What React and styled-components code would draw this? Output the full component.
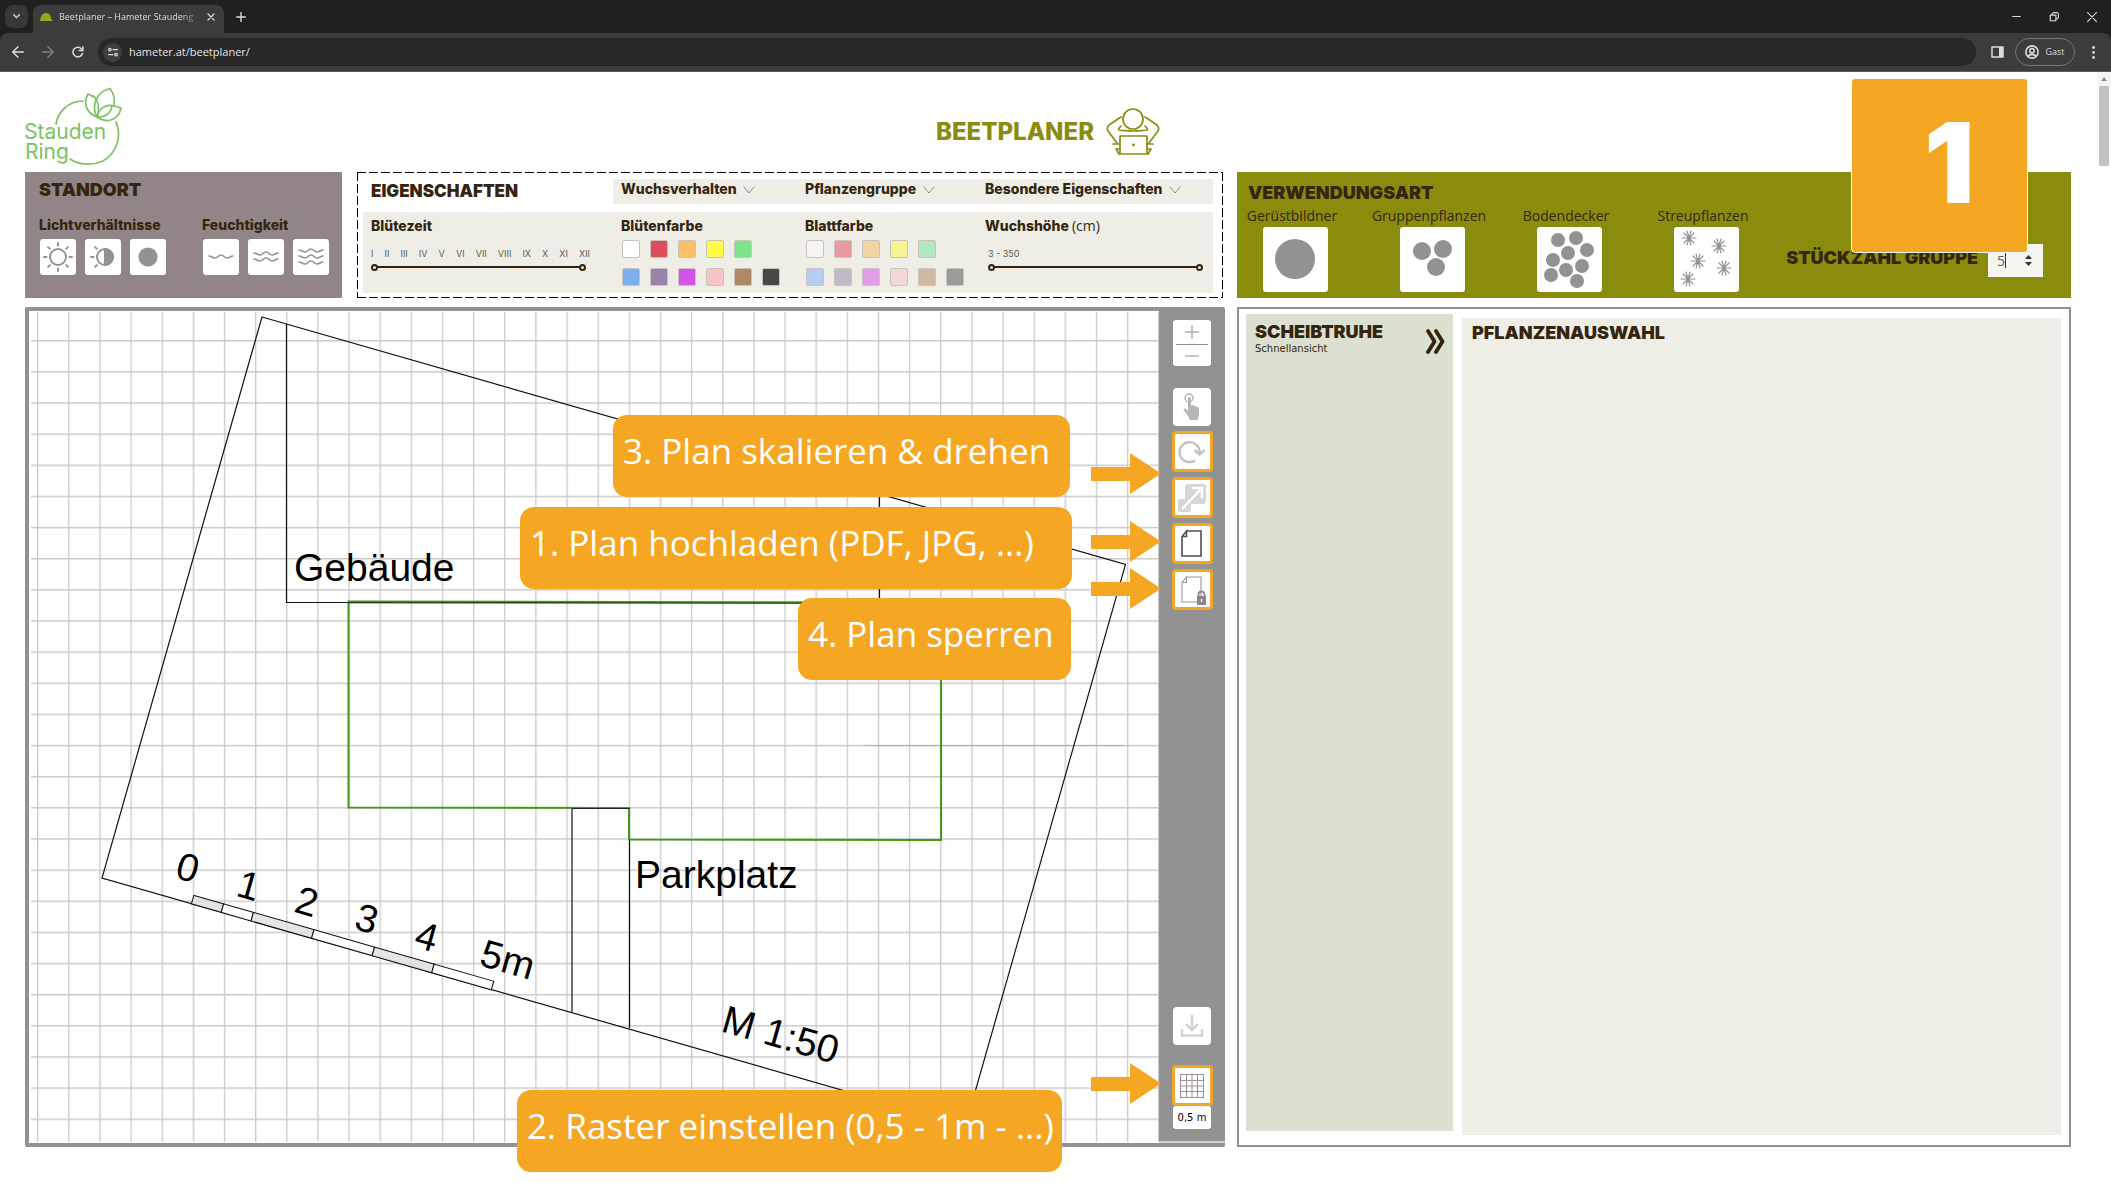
import React, { useState } from "react";
import styled, { createGlobalStyle } from "styled-components";

const color = {
  ink: "#35250f",
  grey: "#929292",
  olive: "#8a8c0e",
  mauve: "#928587",
  sand: "#eeede6",
  sage: "#dce0d1",
  orange: "#f5a623",
};

const GlobalStyle = createGlobalStyle`
  *, *::before, *::after { box-sizing: border-box; }
  body { margin: 0; background: #fff; color: ${color.ink}; font-family: Inter, "Liberation Sans", sans-serif; }
  button { font: inherit; color: inherit; padding: 0; border: 0; background: none; cursor: pointer; }
  svg { display: block; flex: none; }
`;

/* ---------- browser window ---------- */

const Chrome = styled.header`
  background: #202020;
  color: #dcdcdc;
  font-family: "Open Sans", sans-serif;
  border-bottom: 1px solid #5c5c5c;
`;

const TabStrip = styled.div`
  display: flex;
  align-items: flex-end;
  height: 33px;
  padding: 0 8px 0 5px;
`;

const TabSearch = styled.button`
  display: grid;
  place-items: center;
  width: 23px;
  height: 23px;
  margin: 0 5px 5px 0;
  border-radius: 8px;
  background: #383838;
`;

const Tab = styled.div`
  display: flex;
  align-items: center;
  gap: 6px;
  width: 191px;
  height: 28px;
  padding: 0 9px 4px 7px;
  border-radius: 8px 8px 0 0;
  background: #3c3c3c;
`;

const TabTitle = styled.span`
  flex: 1;
  overflow: hidden;
  white-space: nowrap;
  font-size: 9px;
  line-height: 14px;
  mask-image: linear-gradient(90deg, #000 86%, transparent);
`;

const NewTab = styled.button`
  display: grid;
  place-items: center;
  width: 34px;
  height: 33px;
`;

const WindowControls = styled.div`
  display: flex;
  margin-left: auto;
`;

const WindowButton = styled.button`
  display: grid;
  place-items: center;
  width: 38px;
  height: 33px;
  &:last-child { width: 22px; margin-left: 8px; }
`;

const NavBar = styled.div`
  display: flex;
  align-items: center;
  height: 38px;
  padding: 0 3px;
  background: #3c3c3c;
  border-radius: 8px 8px 0 0;
`;

const NavButton = styled.button`
  display: grid;
  place-items: center;
  width: 30px;
  height: 28px;
  color: ${(p) => (p.$dim ? "#7d7d7d" : "#dcdcdc")};
`;

const AddressBar = styled.label`
  display: flex;
  align-items: center;
  flex: 1;
  gap: 7px;
  height: 28px;
  margin: 0 6px 0 5px;
  padding: 0 5px;
  border-radius: 14px;
  background: #282828;
`;

const SiteInfo = styled.span`
  display: grid;
  place-items: center;
  width: 19px;
  height: 19px;
  border-radius: 50%;
  background: #3f3f3f;
`;

const AddressInput = styled.input`
  flex: 1;
  padding: 0;
  border: 0;
  outline: 0;
  background: none;
  color: #e4e4e4;
  font: 11px/16px "Open Sans", sans-serif;
`;

const Profile = styled.button`
  display: flex;
  align-items: center;
  justify-content: center;
  gap: 6px;
  width: 60px;
  height: 28px;
  margin: 0 3px;
  border: 1px solid #767676;
  border-radius: 14px;
  font-size: 9px;
  line-height: 14px;
`;

const Viewport = styled.div`
  display: flex;
`;

const ScrollTrack = styled.div`
  display: flex;
  flex-direction: column;
  align-items: center;
  width: 14px;
`;

const ScrollArrow = styled.span`
  display: grid;
  place-items: center;
  width: 14px;
  height: 14px;
  background: #f4f4f4;
`;

const ScrollThumb = styled.span`
  width: 10px;
  height: 80px;
  background: #c1c1c1;
`;

/* ---------- page ---------- */

const Page = styled.main`
  position: relative;
  flex: 1;
  min-width: 0;
  padding: 0 26px 40px 25px;
`;

const PageHeader = styled.div`
  display: grid;
  grid-template-columns: 1fr auto 1fr;
  align-items: center;
  height: 100px;
`;

const LogoLink = styled.a`
  justify-self: start;
  padding-top: 10px;
`;

const Title = styled.h1`
  display: flex;
  align-items: center;
  gap: 12px;
  margin: 0;
  padding-top: 20px;
  color: ${color.olive};
  font-weight: 800;
  font-size: 24px;
  line-height: 32px;
`;

const Layout = styled.div`
  display: grid;
  grid-template-columns: 1200fr 834fr;
  gap: 9px 12px;
`;

const Filters = styled.div`
  display: grid;
  grid-template-columns: 317px 1fr;
  gap: 15px;
  height: 126px;
  padding-right: 2px;
`;

const Heading = styled.h2`
  margin: 0;
  font-weight: 900;
  font-size: ${(p) => (p.$small ? 17 : 18)}px;
  line-height: 20px;
`;

const SubHeading = styled.h3`
  margin: 0;
  font-weight: 800;
  font-size: 14px;
  line-height: 20px;
`;

const Unit = styled.span`
  font-family: "Open Sans", sans-serif;
  font-weight: 400;
`;

const SiteCard = styled.section`
  padding: 8px 14px;
  background: ${color.mauve};
`;

const SiteGroups = styled.div`
  display: flex;
  gap: 36px;
  margin-top: 15px;
`;

const IconRow = styled.div`
  display: flex;
  gap: 9px;
  margin: 4px 0 0 1px;
`;

const IconButton = styled.button`
  display: grid;
  place-items: center;
  width: 36px;
  height: 36px;
  border-radius: 3px;
  background: #fff;
`;

const dashX = "repeating-linear-gradient(90deg, #000 0 9px, transparent 9px 12px)";
const dashY = "repeating-linear-gradient(180deg, #000 0 9px, transparent 9px 12px)";

const Traits = styled.section`
  display: flex;
  flex-direction: column;
  gap: 8px;
  padding: 7px 10px 5px 6px;
  background:
    ${dashX} top / 100% 1px no-repeat,
    ${dashX} bottom / 100% 1px no-repeat,
    ${dashY} left / 1px 100% no-repeat,
    ${dashY} right / 1px 100% no-repeat;
`;

const TraitRow = styled.div`
  display: grid;
  grid-template-columns: 250fr 184fr 180fr 236fr;
  height: ${(p) => (p.$tall ? 81 : 25)}px;
  background: ${(p) => (p.$tall ? color.sand : `linear-gradient(90deg, #fff 250px, ${color.sand} 250px)`)};
`;

const TraitCell = styled.div`
  padding: ${(p) => (p.$head ? 2 : 4)}px 8px 0;
`;

const DropLabel = styled.label`
  display: flex;
  align-items: center;
  gap: 6px;
  padding: 0 8px 5px;
`;

const DropSelect = styled.select`
  appearance: none;
  padding: 0;
  border: 0;
  background: none;
  color: ${color.ink};
  font: 800 14px/20px Inter, sans-serif;
`;

const Swatches = styled.div`
  display: grid;
  grid-template-columns: repeat(6, 18px);
  gap: 10px;
  margin: 4px 0 0 1px;
`;

const Swatch = styled.button`
  width: 18px;
  height: 18px;
  border: 1px solid #c9c4bb;
  border-radius: 2px;
  background: ${(p) => p.$fill};
`;

const Months = styled.div`
  display: flex;
  justify-content: space-between;
  width: 219px;
  margin-top: 12px;
  color: #5f5a52;
  font-size: 9px;
  line-height: 12px;
`;

const RangeText = styled.div`
  margin: 12px 0 0 3px;
  color: #5f5a52;
  font-size: 9px;
  line-height: 12px;
`;

const DualRange = styled.div`
  position: relative;
  width: 215px;
  height: 8px;
  margin: ${(p) => (p.$indent ? "3px 0 0 3px" : "3px 0 0")};
  background: linear-gradient(${color.ink}, ${color.ink}) center / calc(100% - 12px) 2px no-repeat;
`;

const RangeInput = styled.input`
  position: absolute;
  inset: 0;
  width: 100%;
  height: 8px;
  margin: 0;
  appearance: none;
  background: none;
  pointer-events: none;
  &::-webkit-slider-thumb {
    appearance: none;
    width: 7px;
    height: 7px;
    border: 2px solid ${color.ink};
    border-radius: 50%;
    background: ${color.sand};
    pointer-events: auto;
  }
`;

const UsageCard = styled.section`
  display: flex;
  justify-content: space-between;
  height: 126px;
  padding: 11px 28px 5px 0;
  background: ${color.olive};
`;

const UsageHeading = styled(Heading)`
  padding-left: 11px;
`;

const UsageTypes = styled.div`
  display: grid;
  grid-template-columns: repeat(4, 116px);
  gap: 21px;
  margin-top: 3px;
`;

const UsageType = styled.button`
  display: flex;
  flex-direction: column;
  align-items: center;
  font: 14px/20px "Open Sans", sans-serif;
`;

const UsageName = styled.span`
  padding-right: 6px;
`;

const UsageTile = styled.span`
  display: grid;
  place-items: center;
  width: 65px;
  height: 65px;
  margin-top: 1px;
  border-radius: 3px;
  background: #fff;
`;

const Amount = styled.div`
  display: flex;
  align-items: center;
  align-self: flex-end;
  gap: 10px;
  margin-bottom: 16px;
`;

const AmountLabel = styled.label`
  padding-bottom: 6px;
  font-weight: 900;
  font-size: 18px;
  line-height: 20px;
`;

const AmountField = styled.div`
  display: flex;
  align-items: center;
  width: 55px;
  height: 33px;
  padding: 0 11px 0 9px;
  background: #f6f6f1;
`;

const AmountInput = styled.input`
  width: 8px;
  padding: 0;
  border: 0;
  outline: 0;
  appearance: textfield;
  background: none;
  color: #5f5f5f;
  font: 14px/20px "Open Sans", sans-serif;
  &::-webkit-inner-spin-button { display: none; }
`;

const Caret = styled.span`
  width: 1px;
  height: 15px;
  background: #333;
`;

const Spinner = styled.div`
  display: flex;
  flex-direction: column;
  gap: 3px;
  margin-left: auto;
`;

/* ---------- plan ---------- */

const PlanPanel = styled.section`
  display: grid;
  grid-template-columns: 1fr 66px;
  align-items: stretch;
  border: solid ${color.grey};
  border-width: 4px 0 4px 4px;
  border-radius: 2px;
  background: #fff;
`;

const PlanDrawing = styled.svg`
  width: 100%;
  height: auto;
`;

const PlanText = styled.text`
  font: 39px "Liberation Sans", Arial, sans-serif;
  fill: #000;
`;

const Tools = styled.div`
  display: flex;
  flex-direction: column;
  align-items: center;
  gap: 5px;
  padding: 9px 0 12px;
  border-bottom: 2px solid #cfcfcf;
  background: ${color.grey};
`;

const ZoomGroup = styled.div`
  display: flex;
  flex-direction: column;
  align-items: center;
  width: 38px;
  margin-bottom: 17px;
  border-radius: 3px;
  background: #fff;
`;

const ZoomButton = styled.button`
  display: grid;
  place-items: center;
  width: 32px;
  height: ${(p) => (p.$upper ? 25 : 21)}px;
  border-bottom: ${(p) => (p.$upper ? `1px solid ${color.grey}` : 0)};
`;

const Tool = styled.button`
  display: grid;
  place-items: center;
  width: ${(p) => (p.$marked ? 41 : 38)}px;
  height: ${(p) => (p.$marked ? 41 : 38)}px;
  border: ${(p) => (p.$marked ? `3px solid ${color.orange}` : 0)};
  border-radius: 4px;
  background: #fff;
`;

const BottomTools = styled.div`
  display: flex;
  flex-direction: column;
  align-items: center;
  margin-top: auto;
`;

const GridTool = styled(Tool)`
  margin-top: 20px;
`;

const GridSize = styled.button`
  width: 38px;
  height: 23px;
  border-radius: 3px;
  background: #fff;
  color: #000;
  font: 10px/22px "DejaVu Sans", sans-serif;
`;

/* ---------- plant lists ---------- */

const PlantPanel = styled.section`
  display: grid;
  grid-template-columns: 207px 1fr;
  gap: 9px;
  padding: 5px 8px 10px 7px;
  border: 2px solid ${color.grey};
`;

const Barrow = styled.div`
  display: flex;
  justify-content: space-between;
  align-items: flex-start;
  margin-bottom: 4px;
  padding: 8px 8px 0 9px;
  background: ${color.sage};
`;

const BarrowNote = styled.p`
  margin: 0;
  font: 10px/14px "DejaVu Sans", sans-serif;
`;

const ExpandButton = styled.button`
  padding-top: 6px;
`;

const Selection = styled.div`
  margin-top: 4px;
  padding: 5px 10px;
  background: ${color.sand};
`;

/* ---------- tutorial overlay ---------- */

const StepBadge = styled.div`
  position: absolute;
  top: 6px;
  right: 69px;
  display: flex;
  align-items: center;
  width: 177px;
  height: 175px;
  padding: 0 0 8px 72px;
  border: 1px solid #fff;
  border-radius: 4px;
  background: ${color.orange};
  color: #fff;
  font-weight: 900;
  font-size: 112px;
  line-height: 112px;
`;

const Hint = styled.div`
  position: absolute;
  top: ${(p) => p.$top}px;
  left: ${(p) => p.$left}px;
  display: flex;
  align-items: center;
  width: ${(p) => p.$width}px;
  height: 82px;
  padding: 0 0 10px 10px;
  border-radius: 14px;
  background: ${color.orange};
  color: #fff;
  white-space: nowrap;
  font: 35px/48px "Open Sans", sans-serif;
`;

const HintArrow = styled.svg`
  position: absolute;
  top: ${(p) => p.$top}px;
  left: 1091px;
  width: 70px;
  height: 41px;
`;

/* ---------- drawings ---------- */

const line = { fill: "none", stroke: "currentColor", strokeLinecap: "round", strokeLinejoin: "round" };

const Stroke = ({ size = 14, w = 1.6, d, box = 16, h, stroke }) => (
  <svg width={size} height={h || size} viewBox={`0 0 ${box} ${h ? (box * h) / size : box}`} {...line} strokeWidth={w} stroke={stroke || "currentColor"}>
    <path d={d} />
  </svg>
);

const Chevron = () => <Stroke size={12} h={9} box={12} w={1} stroke="#8d8a83" d="M1 2l5 6 5-6" />;

const Logo = () => (
  <svg width="98" height="80" viewBox="25 87 98 80" fill="none" stroke="#7cc163" strokeWidth="1.7" strokeLinecap="round" strokeLinejoin="round">
    <path d="M56 124C58 112 68 101 83 101" />
    <path d="M116 122C122 136 117 153 103 161C92 166 79 165 70 159" />
    <path d="M97 117C86 113 83 103 88 94L94 97" />
    <path d="M97 117C91 106 96 92 110 88.500C114 94 115 100 114 105" />
    <path d="M97 117C100 109 98 101 94 96" />
    <path d="M97 117C99 108 106 104 114 106L121 108C119 118 109 125 97 117Z" />
    <path d="M97 117C105 118 111 113 112 106" />
    <g fill="#7cc163" stroke="none" fontFamily="Inter, sans-serif" fontSize="21">
      <text x="24" y="139">Stauden</text>
      <text x="25" y="159">Ring</text>
    </g>
  </svg>
);

const PlannerIcon = () => (
  <svg width="54" height="48" viewBox="0 0 54 48" {...line} strokeWidth="1.7">
    <circle cx="27" cy="11" r="10" />
    <path d="M15 9L3 17C1 19 1 21 2 23L11 35M39 9L51 17C53 19 53 21 52 23L43 35" />
    <path d="M15 18C9 24 14 22 27 23C40 22 45 24 39 18" />
    <path d="M14 28h27v18H14z" />
    <path d="M7 36h6M41 36h6M10 41l3 5M45 41l-3 5M10 41h3M42 41h3" />
    <circle cx="27.500" cy="37" r="0.600" />
  </svg>
);

const rays = (angles) =>
  angles.map((a) => <path key={a} d="M0 -11.500V-14" transform={`rotate(${a})`} />);

const Sun = () => (
  <svg width="32" height="32" viewBox="-16 -16 32 32" {...line} stroke={color.grey} strokeWidth="2">
    <circle r="8" />
    {rays([0, 45, 90, 135, 180, 225, 270, 315])}
  </svg>
);

const HalfSun = () => (
  <svg width="32" height="32" viewBox="-18 -16 32 32" {...line} stroke={color.grey} strokeWidth="2">
    <circle r="8" />
    <path d="M0 -8A8 8 0 0 1 0 8Z" fill={color.grey} />
    {rays([225, 270, 315])}
  </svg>
);

const Dot = () => (
  <svg width="20" height="20" viewBox="0 0 20 20"><circle cx="10" cy="10" r="9.500" fill={color.grey} /></svg>
);

const Waves = ({ rows }) => (
  <svg width="26" height="20" viewBox="0 -10 26 20" {...line} stroke={color.grey} strokeWidth="1.6">
    {rows.map((y) => (
      <path key={y} d={`M1 ${y - 1}c3 0 3 2 6 2s3-3 6-3 3 3 6 3 3-2 6-2`} />
    ))}
  </svg>
);

const Dots = ({ points, r }) => (
  <svg width="65" height="65" viewBox="0 0 65 65" fill={color.grey}>
    {points.map(([x, y]) => <circle key={`${x}-${y}`} cx={x} cy={y} r={r} />)}
  </svg>
);

const Stars = ({ points }) => (
  <svg width="65" height="65" viewBox="0 0 65 65" {...line} stroke={color.grey} strokeWidth="1.2">
    {points.map(([x, y]) => (
      <path key={x} transform={`translate(${x} ${y})`} d="M-7 0H7M-5 -5L5 5M5 -5L-5 5M-2 -7L2 7M2 -7L-2 7" />
    ))}
  </svg>
);

const HandIcon = () => (
  <svg width="18" height="28" viewBox="0 0 18 28">
    <circle cx="6" cy="5" r="4" fill="none" stroke="#b5b5b5" strokeWidth="1.500" />
    <path d="M5 5q1.500-1.500 3 0v8l1-1q1.500-.5 2 1 2-1 2.500 1 2.500-.5 2.500 2v6l-1.500 5H7L5 23 .5 17q0-2 2-1.500L5 18z" fill="#b5b5b5" />
  </svg>
);

const RotateIcon = () => (
  <svg width="28" height="26" viewBox="0 0 28 26" {...line} strokeLinecap="butt" stroke="#c2c2c2" strokeWidth="2.400">
    <path d="M17 21.500A10 10 0 1 1 21.500 14" />
    <path d="M16.500 11L21.500 15.500L26.500 11" />
  </svg>
);

const ScaleIcon = () => (
  <svg width="30" height="30" viewBox="0 0 30 30">
    <rect x="8" y="1" width="21" height="20" rx="3" fill="#d6d6d6" />
    <rect x="1" y="16" width="13" height="13" rx="2" fill="#d6d6d6" />
    <path d="M5 26L24 6M15 5h10v10" fill="none" stroke="#fff" strokeWidth="2.500" />
  </svg>
);

const SheetIcon = ({ locked }) => (
  <svg width="28" height="30" viewBox="0 0 28 30" fill="none" stroke={locked ? "#9a9496" : "#4f4d4d"} strokeWidth={locked ? 1.1 : 1.6}>
    <path d="M8.500 2H23v25H4V7.500L8.500 2V7.500H4" />
    {locked && (
      <>
        <rect x="19" y="21" width="9" height="9" fill="#8f8689" stroke="none" />
        <path d="M20.500 22v-2.500a3 3 0 0 1 6 0V22" stroke="#8f8689" strokeWidth="1.800" />
        <path d="M23.500 24v3" stroke="#fff" strokeWidth="1.200" />
      </>
    )}
  </svg>
);

const DownloadIcon = () => (
  <svg width="24" height="24" viewBox="0 0 24 24" fill="none" stroke="#d3d3d3" strokeWidth="2.400">
    <path d="M12 1v14M6 10l6 6 6-6M2 15v6.500h20V15" />
  </svg>
);

const RasterIcon = () => (
  <svg width="26" height="26" viewBox="0 0 26 26" fill="none" stroke="#9c9396" strokeWidth="1.100">
    <rect x="1.500" y="1.500" width="23" height="23" />
    <path d="M7.500 1.500v23M13 1.500v23M18.500 1.500v23M1.500 7.500h23M1.500 13h23M1.500 18.500h23" />
  </svg>
);

const scaleMarks = [
  ["0", 188, 867],
  ["1", 249, 885],
  ["2", 307, 901],
  ["3", 367, 918],
  ["4", 427, 936],
  ["5m", 508, 959],
  ["M 1:50", 781, 1034],
];
const scaleTicks = [94, 125, 156, 219, 282, 344, 406];

const SitePlan = () => (
  <PlanDrawing viewBox="29 311 1130 832" role="img" aria-label="Gartenplan">
    <defs>
      <pattern id="raster" x="37" y="340" width="31.140" height="31.140" patternUnits="userSpaceOnUse">
        <path d="M0.700 0V31.140M0 0.700H31.140" stroke="#c9c9c9" strokeWidth="1.300" fill="none" />
      </pattern>
    </defs>
    <rect x="31" y="312" width="1128" height="830" fill="url(#raster)" />
    <path d="M865 745.500H1125" stroke="#b0b0b0" />
    <g fill="none" stroke="#111" strokeWidth="1.200">
      <path d="M262 317L1125.500 564.500L965.500 1125.500L102 878Z" />
      <path d="M286.500 324V602.500H879.500V494" />
      <path d="M572 1012V808.500H629.500V1028" />
    </g>
    <path d="M348.500 601.500L941 602.500V840L629 839.500V808L348.500 807.500Z" fill="none" stroke="#3f9a12" strokeWidth="2" />
    <path d="M348 602.800L880 603.300M572 808.500H629.500" stroke="#222" strokeWidth="1" />
    <g transform="translate(101 878) rotate(16)" stroke="#111">
      {scaleTicks.slice(0, -1).map((x, i) => (
        <rect key={x} x={x} y="-9" width={scaleTicks[i + 1] - x} height="9" fill={i % 2 ? "#fff" : "#dedede"} fillOpacity="0.800" />
      ))}
    </g>
    {scaleMarks.map(([label, x, y]) => (
      <PlanText key={label} transform={`translate(${x} ${y}) rotate(16)`} y="14" textAnchor="middle">{label}</PlanText>
    ))}
    <PlanText x="294" y="581">Gebäude</PlanText>
    <PlanText x="635" y="888">Parkplatz</PlanText>
  </PlanDrawing>
);

/* ---------- data ---------- */

const months = ["I", "II", "III", "IV", "V", "VI", "VII", "VIII", "IX", "X", "XI", "XII"];

const flowerColors = [
  ["weiß", "#ffffff"], ["rot", "#df4a5d"], ["orange", "#fac063"], ["gelb", "#fffa45"], ["grün", "#7ce38f"], null,
  ["blau", "#7dafee"], ["violett", "#9883ad"], ["magenta", "#d452e8"], ["rosa", "#f8c5c7"], ["braun", "#ae8765"], ["schwarz", "#484848"],
];
const leafColors = [
  ["weiß", "#f6f5f1"], ["rot", "#e79aa2"], ["orange", "#f3d5a4"], ["gelb", "#f7f294"], ["grün", "#b3e7bb"], null,
  ["blau", "#b4ceeb"], ["violett", "#c1b8c8"], ["magenta", "#e09fe8"], ["rosa", "#f2d8d6"], ["braun", "#cfb9a5"], ["schwarz", "#9b9b97"],
];

const usageTypes = [
  ["Gerüstbildner", <Dots r={20} points={[[32, 32]]} />],
  ["Gruppenpflanzen", <Dots r={9} points={[[22, 24], [43, 22], [36, 40]]} />],
  ["Bodendecker", <Dots r={7} points={[[21, 13], [39, 11], [50, 23], [31, 26], [16, 33], [45, 39], [29, 43], [14, 48], [40, 54]]} />],
  ["Streupflanzen", <Stars points={[[15, 11], [45, 19], [24, 34], [50, 41], [14, 52]]} />],
];

const hints = [
  ["3. Plan skalieren & drehen", 343, 613, 457],
  ["1. Plan hochladen (PDF, JPG, ...)", 435, 520, 552],
  ["4. Plan sperren", 526, 798, 273],
  ["2. Raster einstellen (0,5 - 1m - ...)", 1018, 517, 545],
];
const arrows = [381, 449, 496, 991];

/* ---------- components ---------- */

const Palette = ({ name, colors }) => (
  <Swatches>
    {colors.map((c, i) => (c ? <Swatch key={c[0]} $fill={c[1]} aria-label={`${name} ${c[0]}`} /> : <span key={i} />))}
  </Swatches>
);

const Dropdown = ({ name }) => (
  <DropLabel>
    <DropSelect aria-label={name}><option>{name}</option></DropSelect>
    <Chevron />
  </DropLabel>
);

const Range = ({ name, min, max, indent }) => {
  const [low, setLow] = useState(min);
  const [high, setHigh] = useState(max);
  return (
    <DualRange $indent={indent}>
      <RangeInput type="range" aria-label={`${name} von`} min={min} max={max} value={low} onChange={(e) => setLow(Math.min(+e.target.value, high))} />
      <RangeInput type="range" aria-label={`${name} bis`} min={min} max={max} value={high} onChange={(e) => setHigh(Math.max(+e.target.value, low))} />
    </DualRange>
  );
};

const BrowserBar = () => (
  <Chrome>
    <TabStrip>
      <TabSearch aria-label="Tabs suchen"><Stroke size={9} w={2.500} d="M3 5l5 5 5-5" /></TabSearch>
      <Tab>
        <svg width="13" height="9" viewBox="0 0 13 9"><path d="M0 8Q1 0 6 0t5 6l2 2z" fill="#99a61c" /></svg>
        <TabTitle>Beetplaner – Hameter Staudeng</TabTitle>
        <Stroke size={8} w={2.400} d="M2 2l12 12M14 2L2 14" />
      </Tab>
      <NewTab aria-label="Neuer Tab"><Stroke size={10} w={2.200} d="M8 1v14M1 8h14" /></NewTab>
      <WindowControls>
        <WindowButton aria-label="Minimieren"><Stroke size={9} w={1.800} d="M1 8h14" /></WindowButton>
        <WindowButton aria-label="Verkleinern"><Stroke size={10} w={1.800} d="M2 5h9v9H2zM5 3q1-2 3-2h4q3 0 3 3v4q0 2-2 3" /></WindowButton>
        <WindowButton aria-label="Schließen"><Stroke size={10} w={1.800} d="M1 1l14 14M15 1L1 15" /></WindowButton>
      </WindowControls>
    </TabStrip>
    <NavBar>
      <NavButton aria-label="Zurück"><Stroke size={12} w={2} d="M15 8H1M8 1L1 8l7 7" /></NavButton>
      <NavButton $dim aria-label="Vor"><Stroke size={12} w={2} d="M1 8h14M8 1l7 7-7 7" /></NavButton>
      <NavButton aria-label="Neu laden"><Stroke size={12} w={2} d="M14 10A6.500 6.500 0 1 1 12.500 3.500L14.500 6M14.500 1v5h-5" /></NavButton>
      <AddressBar>
        <SiteInfo>
          <Stroke size={10} w={2} d="M1 4a2 2 0 1 0 4 0 2 2 0 1 0-4 0M8 4h7M11 12a2 2 0 1 0 4 0 2 2 0 1 0-4 0M1 12h7" />
        </SiteInfo>
        <AddressInput aria-label="Adresse" defaultValue="hameter.at/beetplaner/" />
      </AddressBar>
      <NavButton aria-label="Seitenleiste">
        <svg width="13" height="12" viewBox="0 0 13 12"><path d="M1 1h11v10H1z" fill="none" stroke="currentColor" strokeWidth="1.500" /><path d="M8 1h4v10H8z" fill="currentColor" /></svg>
      </NavButton>
      <Profile>
        <Stroke size={14} w={1.800} d="M1 8a7 7 0 1 0 14 0A7 7 0 1 0 1 8M5.500 6.500a2.500 2.500 0 1 0 5 0 2.500 2.500 0 1 0-5 0M3 13q5-4.500 10 0" />
        Gast
      </Profile>
      <NavButton aria-label="Menü">
        <svg width="3" height="13" viewBox="0 0 3 13" fill="currentColor"><circle cx="1.500" cy="1.500" r="1.400" /><circle cx="1.500" cy="6.500" r="1.400" /><circle cx="1.500" cy="11.500" r="1.400" /></svg>
      </NavButton>
    </NavBar>
  </Chrome>
);

const SiteConditions = () => (
  <SiteCard>
    <Heading>STANDORT</Heading>
    <SiteGroups>
      <div>
        <SubHeading>Lichtverhältnisse</SubHeading>
        <IconRow>
          <IconButton aria-label="Sonnig"><Sun /></IconButton>
          <IconButton aria-label="Halbschattig"><HalfSun /></IconButton>
          <IconButton aria-label="Schattig"><Dot /></IconButton>
        </IconRow>
      </div>
      <div>
        <SubHeading>Feuchtigkeit</SubHeading>
        <IconRow>
          <IconButton aria-label="Trocken"><Waves rows={[0]} /></IconButton>
          <IconButton aria-label="Frisch"><Waves rows={[-3, 3]} /></IconButton>
          <IconButton aria-label="Feucht"><Waves rows={[-6, 0, 6]} /></IconButton>
        </IconRow>
      </div>
    </SiteGroups>
  </SiteCard>
);

const PlantTraits = () => (
  <Traits>
    <TraitRow>
      <TraitCell $head><Heading $small>EIGENSCHAFTEN</Heading></TraitCell>
      <Dropdown name="Wuchsverhalten" />
      <Dropdown name="Pflanzengruppe" />
      <Dropdown name="Besondere Eigenschaften" />
    </TraitRow>
    <TraitRow $tall>
      <TraitCell>
        <SubHeading>Blütezeit</SubHeading>
        <Months>{months.map((m) => <span key={m}>{m}</span>)}</Months>
        <Range name="Blütezeit" min={1} max={12} />
      </TraitCell>
      <TraitCell>
        <SubHeading>Blütenfarbe</SubHeading>
        <Palette name="Blütenfarbe" colors={flowerColors} />
      </TraitCell>
      <TraitCell>
        <SubHeading>Blattfarbe</SubHeading>
        <Palette name="Blattfarbe" colors={leafColors} />
      </TraitCell>
      <TraitCell>
        <SubHeading>Wuchshöhe <Unit>(cm)</Unit></SubHeading>
        <RangeText>3 - 350</RangeText>
        <Range name="Wuchshöhe" min={3} max={350} indent />
      </TraitCell>
    </TraitRow>
  </Traits>
);

const Usage = () => {
  const [amount, setAmount] = useState(5);
  return (
    <UsageCard>
      <div>
        <UsageHeading>VERWENDUNGSART</UsageHeading>
        <UsageTypes>
          {usageTypes.map(([name, icon]) => (
            <UsageType key={name}><UsageName>{name}</UsageName><UsageTile>{icon}</UsageTile></UsageType>
          ))}
        </UsageTypes>
      </div>
      <Amount>
        <AmountLabel htmlFor="amount">STÜCKZAHL GRUPPE</AmountLabel>
        <AmountField>
          <AmountInput id="amount" type="number" value={amount} onChange={(e) => setAmount(e.target.value)} />
          <Caret />
          <Spinner>
            <button aria-label="Mehr" onClick={() => setAmount(+amount + 1)}><svg width="7" height="4" viewBox="0 0 7 4"><path d="M0 4L3.500 0 7 4z" fill="#333" /></svg></button>
            <button aria-label="Weniger" onClick={() => setAmount(+amount - 1)}><svg width="7" height="4" viewBox="0 0 7 4"><path d="M0 0L3.500 4 7 0z" fill="#333" /></svg></button>
          </Spinner>
        </AmountField>
      </Amount>
    </UsageCard>
  );
};

const Plan = () => (
  <PlanPanel>
    <SitePlan />
    <Tools>
      <ZoomGroup>
        <ZoomButton $upper aria-label="Vergrößern"><Stroke size={14} box={14} w={1} stroke="#8a8a8a" d="M7 0v14M0 7h14" /></ZoomButton>
        <ZoomButton aria-label="Verkleinern"><Stroke size={14} box={14} w={1} stroke="#8a8a8a" d="M0 7h14" /></ZoomButton>
      </ZoomGroup>
      <Tool aria-label="Auswählen"><HandIcon /></Tool>
      <Tool $marked aria-label="Plan drehen"><RotateIcon /></Tool>
      <Tool $marked aria-label="Plan skalieren"><ScaleIcon /></Tool>
      <Tool $marked aria-label="Plan hochladen"><SheetIcon /></Tool>
      <Tool $marked aria-label="Plan sperren"><SheetIcon locked /></Tool>
      <BottomTools>
        <Tool aria-label="Herunterladen"><DownloadIcon /></Tool>
        <GridTool $marked aria-label="Raster"><RasterIcon /></GridTool>
        <GridSize>0,5 m</GridSize>
      </BottomTools>
    </Tools>
  </PlanPanel>
);

const Plants = () => (
  <PlantPanel>
    <Barrow>
      <div>
        <Heading>SCHEIBTRUHE</Heading>
        <BarrowNote>Schnellansicht</BarrowNote>
      </div>
      <ExpandButton aria-label="Aufklappen">
        <svg width="19" height="27" viewBox="0 0 19 27" {...line} strokeWidth="3.800"><path d="M2 3l6.500 10.500L2 24M10 3l6.500 10.500L10 24" /></svg>
      </ExpandButton>
    </Barrow>
    <Selection><Heading>PFLANZENAUSWAHL</Heading></Selection>
  </PlantPanel>
);

export default function App() {
  return (
    <>
      <GlobalStyle />
      <BrowserBar />
      <Viewport>
        <Page>
          <PageHeader>
            <LogoLink href="#" aria-label="Startseite"><Logo /></LogoLink>
            <Title>BEETPLANER <PlannerIcon /></Title>
          </PageHeader>
          <Layout>
            <Filters>
              <SiteConditions />
              <PlantTraits />
            </Filters>
            <Usage />
            <Plan />
            <Plants />
          </Layout>
          <StepBadge>1</StepBadge>
          {hints.map(([text, top, left, width]) => (
            <Hint key={text} $top={top} $left={left} $width={width}>{text}</Hint>
          ))}
          {arrows.map((top) => (
            <HintArrow key={top} $top={top} viewBox="0 0 70 41"><path d="M0 14h39V0l31 20.500L39 41V28H0z" fill={color.orange} /></HintArrow>
          ))}
        </Page>
        <ScrollTrack>
          <ScrollArrow><svg width="6" height="4" viewBox="0 0 6 4"><path d="M0 4l3-4 3 4z" fill="#8a8a8a" /></svg></ScrollArrow>
          <ScrollThumb />
        </ScrollTrack>
      </Viewport>
    </>
  );
}
